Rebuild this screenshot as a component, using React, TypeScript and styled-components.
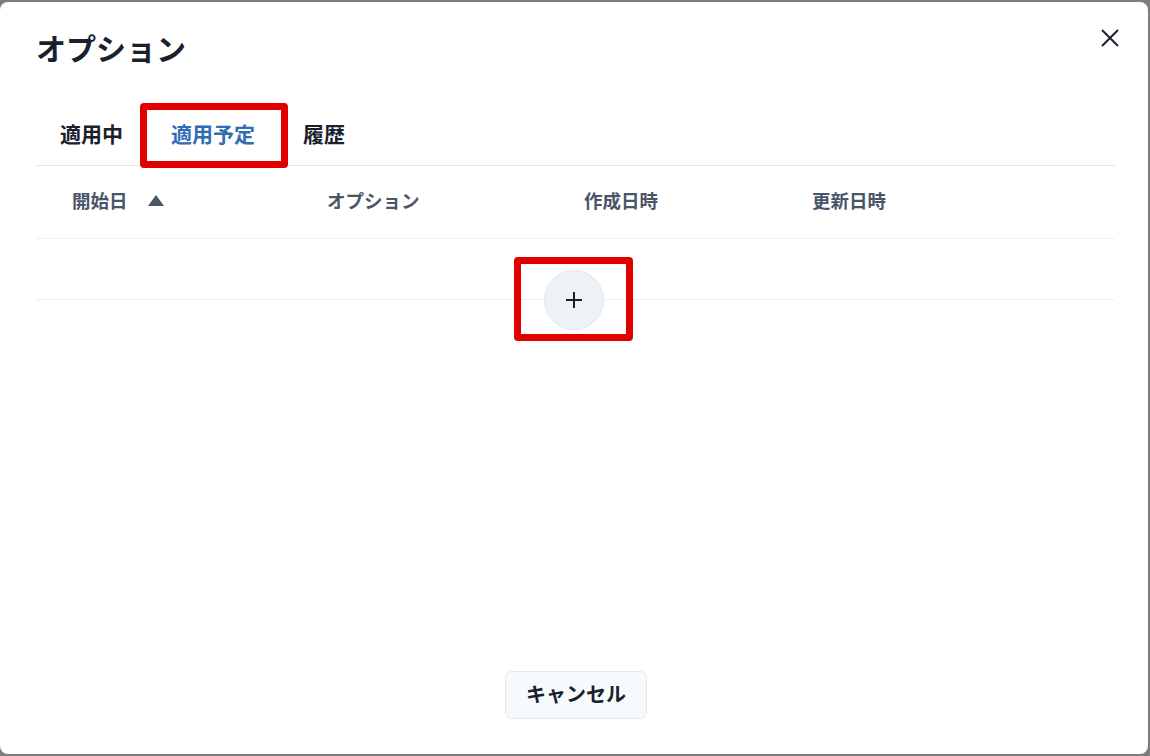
import styled, { createGlobalStyle } from "styled-components";

const GlobalStyle = createGlobalStyle`
  html, body {
    margin: 0;
    padding: 0;
    background: #7d7d7d;
    font-family: "Noto Sans CJK JP", "Noto Sans", sans-serif;
    color: #1a202c;
  }
`;

const Page = styled.div`
  width: 1150px;
  height: 756px;
  padding-top: 2px;
  box-sizing: border-box;
`;

const Modal = styled.div`
  position: relative;
  width: 1148px;
  height: 752px;
  background: #ffffff;
  border-radius: 8px;
  display: flex;
  flex-direction: column;
`;

const Header = styled.div`
  display: flex;
  justify-content: space-between;
  align-items: flex-start;
  padding: 20px 22px 0 36px;
`;

const Title = styled.h2`
  margin: 4px 0 0;
  font-size: 30px;
  line-height: 42px;
  font-weight: 600;
  color: #1a202c;
`;

const CloseButton = styled.button`
  width: 32px;
  height: 32px;
  display: flex;
  align-items: center;
  justify-content: center;
  border: none;
  background: transparent;
  padding: 0;
  cursor: pointer;
  color: #1a202c;
`;

const Body = styled.div`
  flex: 1;
  padding: 38px 33px 0 36px;
`;

const TabList = styled.div`
  display: flex;
  border-bottom: 1px solid #e2e8f0;
`;

const Tab = styled.button<{ $active?: boolean }>`
  height: 59px;
  padding: 0 24px 6px;
  border: none;
  background: transparent;
  font-family: inherit;
  font-size: 21px;
  font-weight: 600;
  color: ${({ $active }) => ($active ? "#2f6db5" : "#1a202c")};
  cursor: pointer;
`;

const TableRow = styled.div<{ $height: number }>`
  display: grid;
  grid-template-columns: 255px 257px 228px 1fr;
  align-items: center;
  box-sizing: border-box;
  height: ${({ $height }) => $height}px;
  padding: 0 0 4px 36px;
  border-bottom: 1px solid #edf0f4;
`;

const HeadCell = styled.div`
  display: flex;
  align-items: center;
  gap: 20px;
  font-size: 18.5px;
  font-weight: 600;
  color: #4a5568;
`;

const AddRow = styled.div`
  display: flex;
  justify-content: center;
  margin-top: -30px;
  padding-right: 3px;
`;

const AddButton = styled.button`
  width: 60px;
  height: 60px;
  border-radius: 50%;
  background: #edf2f7;
  border: 1px solid #e2e8f0;
  display: flex;
  align-items: center;
  justify-content: center;
  padding: 0;
  color: #1a202c;
  cursor: pointer;
`;

const Footer = styled.div`
  display: flex;
  justify-content: center;
  padding: 0 0 35px 4px;
`;

const CancelButton = styled.button`
  width: 142px;
  height: 48px;
  padding: 0 0 4px;
  background: #f7fafc;
  border: 1px solid #e2e8f0;
  border-radius: 7px;
  font-family: inherit;
  font-size: 20px;
  font-weight: 600;
  color: #1a202c;
  cursor: pointer;
`;

const Highlight = styled.div<{ $x: number; $y: number; $w: number; $h: number }>`
  position: absolute;
  left: ${({ $x }) => $x}px;
  top: ${({ $y }) => $y}px;
  width: ${({ $w }) => $w}px;
  height: ${({ $h }) => $h}px;
  box-sizing: border-box;
  border: 7px solid #e10000;
  border-radius: 4px;
  pointer-events: none;
`;

const SortIcon = () => (
  <svg width="16" height="11" viewBox="0 0 16 11">
    <path d="M8 0 L16 11 L0 11 Z" fill="#4a5568" />
  </svg>
);

const columns = ["開始日", "オプション", "作成日時", "更新日時"];

export default function App() {
  return (
    <>
      <GlobalStyle />
      <Page>
        <Modal>
          <Header>
            <Title>オプション</Title>
            <CloseButton aria-label="close">
              <svg width="18" height="18" viewBox="0 0 18 18">
                <path
                  d="M1 1 L17 17 M17 1 L1 17"
                  stroke="currentColor"
                  strokeWidth="2"
                />
              </svg>
            </CloseButton>
          </Header>
          <Body>
            <TabList>
              <Tab>適用中</Tab>
              <Tab $active>適用予定</Tab>
              <Tab>履歴</Tab>
            </TabList>
            <TableRow $height={73}>
              {columns.map((c, i) => (
                <HeadCell key={c}>
                  {c}
                  {i === 0 && <SortIcon />}
                </HeadCell>
              ))}
            </TableRow>
            <TableRow $height={61} />
            <AddRow>
              <AddButton aria-label="add">
                <svg width="16" height="16" viewBox="0 0 16 16">
                  <path d="M8 0 V16 M0 8 H16" stroke="currentColor" strokeWidth="2" />
                </svg>
              </AddButton>
            </AddRow>
          </Body>
          <Footer>
            <CancelButton>キャンセル</CancelButton>
          </Footer>
          <Highlight $x={140} $y={101} $w={148} $h={65} />
          <Highlight $x={514} $y={255} $w={119} $h={84} />
        </Modal>
      </Page>
    </>
  );
}
